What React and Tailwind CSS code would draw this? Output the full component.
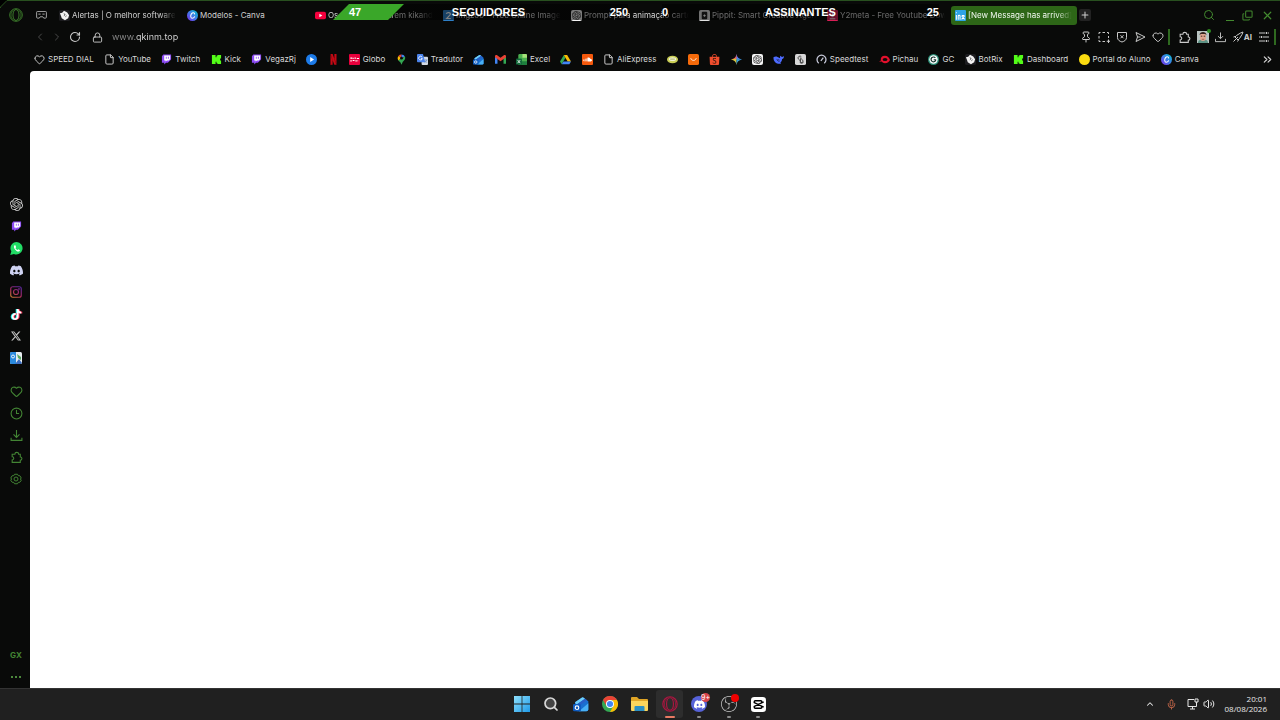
import React from 'react';
import {
  Heart, File, Search, X, Plus, Pin, ChevronLeft, ChevronRight, ChevronUp, ChevronsRight,
  RotateCw, Lock, Clock3, Mic, Volume2, Copy
} from 'lucide-react';
import {
  SiOpenai, SiDiscord, SiTiktok, SiX, SiNetflix,
  SiSoundcloud, SiShopee, SiObsstudio
} from 'react-icons/si';

const OperaLogo = ({ className }) => (
  <svg viewBox="0 0 24 24" fill="none" stroke="currentColor" strokeWidth="1.7" className={className}>
    <circle cx="12" cy="12" r="10.8" />
    <ellipse cx="12" cy="12" rx="5.2" ry="9.4" />
    <path d="M8 3.4c-6 3-6 14.200 0 17.200M16 3.400c6 3 6 14.200 0 17.200" strokeWidth="1.200" />
  </svg>
);

// Thin outline icons shared by the toolbar and the sidebar
const Line = ({ children, className = 'size-3' }) => (
  <svg viewBox="0 0 24 24" fill="none" stroke="currentColor" strokeWidth="2" className={className}>
    {children}
  </svg>
);

const PuzzleIcon = () => (
  <Line className="size-[13px]"><path d="M4 6h5a3.500 3.500 0 0 1 7 0h3v5a3 3 0 0 1 0 6v4H4v-4.500c4 0 4-6 0-6z" /></Line>
);
const DownloadIcon = () => (
  <Line className="size-[13px]"><path d="M12 2v13M6.500 10l5.500 5.500 5.500-5.500M2 16v5h20v-5" /></Line>
);
const SnapshotIcon = () => (
  <Line>
    <path d="M2 6V3h3M9 3h5M18 3h3v3M21 10v4M2 10v5M2 18v3h3M9 21h5M21 17v7M17.500 20.500h7" />
  </Line>
);
const BlockerIcon = () => (
  <Line><path d="M3 3h18v10c0 5-4 7.500-9 9-5-1.500-9-4-9-9zM9 8.500l6 6M15 8.500l-6 6" /></Line>
);
const SendIcon = () => (
  <Line><path d="M4 3l18 9-18 9 3-9zM7 12h6" /></Line>
);
const SlidersIcon = () => (
  <Line><path d="M2 4h13M19 4h3M2 12h3M9 12h13M2 20h13M19 20h3M17 2v4M7 10v4M17 18v4" /></Line>
);
const WandIcon = () => (
  <Line>
    <path d="M9 9l8-5 5-2-2 5-5 8-3 3-6-6zM12 12l-9 9M3 12l3-1M11 21l2-3" />
  </Line>
);

const KickIcon = () => (
  <svg viewBox="0 0 12 12" className="size-[11px]">
    <path fill="#53fc18" d="M1 1h4v2.500h1V2h1V1h4v4h-1v2h1v4H7V10H6V8.500H5V11H1z" />
  </svg>
);

const CanvaIcon = () => (
  <svg viewBox="0 0 12 12" className="size-[11px]">
    <defs>
      <linearGradient id="canva" x1="0" y1="1" x2="1" y2="0">
        <stop offset="0" stopColor="#7d2ae8" />
        <stop offset="0.5" stopColor="#3f7be8" />
        <stop offset="1" stopColor="#00c4cc" />
      </linearGradient>
    </defs>
    <circle cx="6" cy="6" r="6" fill="url(#canva)" />
    <path d="M8.300 4.300C8.300 2.600 6 2.500 4.800 4.200S3.800 9 5.700 9c1.200 0 2-.7 2.600-1.600" fill="none" stroke="#fff" strokeWidth="1.100" strokeLinecap="round" />
  </svg>
);

const BotRixIcon = () => (
  <svg viewBox="0 0 12 12" className="size-[11px]">
    <rect width="12" height="12" rx="2" fill="#1c1c1f" />
    <path d="M5.500 .8L9 2.800l2 3-1 3.200-3.500 2.200L3 9 2.200 6.500 1 3.500l2.500-.4z" fill="#f2f2f2" />
    <path d="M5.200 4l1.600 1-1.500 1.300M7 7.300l1.300-1" stroke="#222" strokeWidth="0.800" fill="none" />
  </svg>
);

const TwitchIcon = () => (
  <svg viewBox="0 0 12 12" className="size-[11px]">
    <path d="M2.500.5L1 2.500v7h2.500v2L5.500 9.500h2L11 6V.5z" fill="#8c4bf5" />
    <path d="M3.500 1.500H10v4L8.500 7h-2L5 8.300V7H3.500z" fill="#fff" />
    <path d="M5.800 3v2.200M8.100 3v2.200" stroke="#8c4bf5" strokeWidth="0.900" />
  </svg>
);

const YoutubeIcon = () => (
  <svg viewBox="0 0 12 12" className="size-[11px]">
    <rect y="1.800" width="12" height="8.400" rx="2" fill="#f5003d" />
    <path d="M4.800 4.200v3.600L8 6z" fill="#fff" />
  </svg>
);

const PlayIcon = () => (
  <svg viewBox="0 0 12 12" className="size-[11px]">
    <circle cx="6" cy="6" r="6" fill="#1d7be8" />
    <path d="M4.600 3.400v5.200L8.800 6z" fill="#fff" />
  </svg>
);

const GloboIcon = () => (
  <svg viewBox="0 0 12 12" className="size-[11px]">
    <rect width="12" height="12" rx="1" fill="#e8003c" />
    <path d="M1.500 4.500h2M4.500 4v1.500M6 4.500h1.500M8.500 5h2.500M1.500 7.500h1.500M4 7.200h2M7 7.500h1.500M9.500 7v1" stroke="#fff" strokeWidth="1.100" fill="none" />
  </svg>
);

const MapsIcon = () => (
  <svg viewBox="0 0 12 12" className="size-[11px]">
    <path d="M6 .5A4.300 4.300 0 0 0 2.600 2.100L6 5z" fill="#ea4335" />
    <path d="M6 .5a4.300 4.300 0 0 1 3.700 2.100L6 5z" fill="#4285f4" />
    <path d="M2.600 2.100A4.300 4.300 0 0 0 2.400 7L6 5z" fill="#fbbc04" />
    <path d="M9.700 2.600C11 5.500 8.500 7 7.300 8.800L6 11.700 4.700 9 2.400 7 6 5z" fill="#34a853" />
    <circle cx="6" cy="4.600" r="1.500" fill="#0a0a0a" />
  </svg>
);

const TranslateIcon = () => (
  <svg viewBox="0 0 12 12" className="size-[11px]">
    <rect x="5" y="3" width="7" height="9" rx="1" fill="#d3d9e2" />
    <path d="M0 1a1 1 0 0 1 1-1h5.500L9 9H1a1 1 0 0 1-1-1z" fill="#4b83ea" />
    <path d="M5.600 3.500A2 2 0 1 0 5.800 5H4.300" stroke="#fff" strokeWidth="0.900" fill="none" />
    <path d="M8.500 6.500h3M10.800 6.500L8.500 9.500M8.800 7.200l2 2.300" stroke="#5c7fb5" strokeWidth="0.700" fill="none" />
  </svg>
);

const OutlookIcon = ({ className = 'size-[11px]' }) => (
  <svg viewBox="0 0 24 24" className={className}>
    <path d="M3 9.500L13 2.500a2.500 2.500 0 0 1 3 0L23 8v12a3 3 0 0 1-3 3H6a3 3 0 0 1-3-3z" fill="#1a6fd0" />
    <path d="M3 9.500L13 2.500a2.500 2.500 0 0 1 3 0l2 1.500L5 13z" fill="#6fd0fa" />
    <path d="M5 13L18 4l3 2.500L9 15z" fill="#2a5fc8" />
    <path d="M9 23L23 11v9a3 3 0 0 1-3 3z" fill="#48b0f5" />
    <rect x="0" y="12" width="12" height="11" rx="2" fill="#0f5cc0" />
    <circle cx="6" cy="17.500" r="2.700" fill="none" stroke="#fff" strokeWidth="1.700" />
  </svg>
);

const GmailIcon = () => (
  <svg viewBox="0 0 12 12" className="size-[11px]">
    <path d="M0 3v7.500h2.700V5z" fill="#4285f4" />
    <path d="M12 3v7.500H9.300V5z" fill="#34a853" />
    <path d="M0 3.500V2.600C0 1 1.700.8 2.700 1.600L6 4.200l3.300-2.600c1-.8 2.700-.6 2.700 1v.9L6 8z" fill="#ea4335" />
  </svg>
);

const ExcelIcon = () => (
  <svg viewBox="0 0 12 12" className="size-[11px]">
    <rect x="2.500" width="9.500" height="12" rx="1.500" fill="#4bb04f" />
    <path d="M7 0h3.500A1.500 1.500 0 0 1 12 1.500V4H7z" fill="#a6e27a" />
    <path d="M2.500 8H12v2.500a1.500 1.500 0 0 1-1.500 1.500H4a1.500 1.500 0 0 1-1.500-1.500z" fill="#1e7f3e" />
    <rect y="5" width="6.500" height="6.500" rx="1" fill="#12693a" />
    <path d="M1.800 6.600l2.800 3.400M4.600 6.600L1.800 10" stroke="#fff" strokeWidth="0.900" />
  </svg>
);

const DriveIcon = () => (
  <svg viewBox="0 0 12 12" className="size-[11px]">
    <path d="M4.200 1.200L0 8.200l1.800 3L6 4.200z" fill="#34a853" />
    <path d="M4.200 1.200h3.600l4.200 7H8.300z" fill="#fbbc04" />
    <path d="M3.800 8.200H12l-1.800 3H1.800z" fill="#4285f4" />
  </svg>
);

const SoundcloudIcon = () => (
  <span className="flex size-[11px] items-center justify-center rounded-[1px] bg-[#f4580c] text-white">
    <SiSoundcloud size={9} />
  </span>
);

const LimeIcon = () => (
  <svg viewBox="0 0 12 12" className="size-[11px]">
    <ellipse cx="6" cy="6" rx="6" ry="4.200" fill="#c9ce55" />
    <ellipse cx="6" cy="5.600" rx="4" ry="2" fill="#f0f1d6" />
    <path d="M3.500 5.600h5" stroke="#8e9340" strokeWidth="0.800" />
  </svg>
);

const OrangeIcon = () => (
  <svg viewBox="0 0 12 12" className="size-[11px]">
    <rect width="12" height="12" rx="2" fill="#f56a0a" />
    <path d="M3 4.500c.5 3.300 5.500 3.300 6 0" stroke="#fff" strokeWidth="0.900" fill="none" />
  </svg>
);

const ShopeeIcon = () => <SiShopee size={11} color="#ee4d2d" />;

const GeminiIcon = () => (
  <svg viewBox="0 0 12 12" className="size-[11px]">
    <path d="M6 0c.6 3.600 2.400 5.400 6 6H5z" fill="#4f7df0" />
    <path d="M6 0C5.400 3.600 3.600 5.400 0 6h6z" fill="#ea5a5a" />
    <path d="M0 6c3.600.6 5.400 2.400 6 6V5z" fill="#d8c33a" />
    <path d="M12 6c-3.600.6-5.400 2.400-6 6V5.500z" fill="#35a2d8" />
  </svg>
);

const GptTile = () => (
  <span className="flex size-[11px] items-center justify-center rounded-[2px] bg-[#f4f4f4] text-[#222]">
    <SiOpenai size={9} />
  </span>
);

const DeepseekIcon = () => (
  <svg viewBox="0 0 12 12" className="size-[11px]">
    <path d="M.5 3.500C2.500 2 5 2.600 6.500 4.200 8 5 8 3 7.500 2c1.300.5 1.700 1.200 2.500 1.200.7-.1 1.300-.6 2-.7 0 1.800-.9 2.700-2 3-.2 2-1 3.200-2 4l.8.8C5.500 11.500.2 9.500.5 3.500z" fill="#4d6bfe" />
    <path d="M4 6c1.200.4 2 1.500 2.700 2.500M6 6l1 .7" stroke="#0a0a0a" strokeWidth="0.800" fill="none" />
  </svg>
);

const ClipTile = () => (
  <svg viewBox="0 0 12 12" className="size-[11px]">
    <rect width="12" height="12" rx="2" fill="#d8d8d8" />
    <path d="M7 3.200A2 2 0 1 0 4 5.800l2.500 2.400M5 8.800a2 2 0 1 0 3-2.600L5.200 3.700M6 5v3.500a1.500 1.500 0 0 0 3 0" stroke="#333" strokeWidth="0.900" fill="none" />
  </svg>
);

const SpeedtestIcon = () => (
  <svg viewBox="0 0 12 12" className="size-[11px]" fill="none">
    <path d="M3 10a4.900 4.900 0 1 1 6 0" stroke="#c9cbdc" strokeWidth="1.400" />
    <path d="M5.300 7.500L8 4" stroke="#c9cbdc" strokeWidth="1.400" />
  </svg>
);

const PichauIcon = () => (
  <svg viewBox="0 0 12 12" className="size-[11px]">
    <path d="M0 8.500L2 7C1.500 4 3 2 6.500 2 9.500 2 11 4 12 6.500 11 8.500 9.500 10 6.500 10 4.500 10 3.500 9 2.800 8.300z" fill="#e2102c" />
    <ellipse cx="6.600" cy="6" rx="2.600" ry="1.700" fill="#0a0a0a" />
  </svg>
);

const GcIcon = () => (
  <svg viewBox="0 0 12 12" className="size-[11px]">
    <circle cx="6" cy="6" r="6" fill="#2c8f78" />
    <circle cx="6" cy="6" r="4.600" fill="#fff" />
    <path d="M8 4.300A2.600 2.600 0 1 0 8.300 7V6.300H6.200" stroke="#17352f" strokeWidth="1.300" fill="none" />
  </svg>
);

const YellowDot = () => <span className="block size-[11px] rounded-full bg-[#fbdc10]" />;

const HeartIcon = () => <Heart size={11} strokeWidth={2} />;
const FileIcon = () => <File size={11} strokeWidth={2} />;

const ZIcon = () => (
  <svg viewBox="0 0 12 12" className="size-[11px]">
    <rect width="12" height="12" rx="1" fill="#2e80c8" />
    <path d="M3.500 4.200C4.500 2 8.500 2.500 8 5L4 9.300h4.500" stroke="#fff" strokeWidth="1.300" fill="none" />
  </svg>
);

const PippitIcon = () => (
  <svg viewBox="0 0 12 12" className="size-[11px]">
    <rect width="12" height="12" rx="2" fill="#e2e2e2" />
    <rect x="3" y="2" width="6" height="8" rx="1" fill="#222" />
    <path d="M6 4.500L7.500 6 6 7.500 4.500 6z" fill="#fff" />
  </svg>
);

const Y2Icon = () => (
  <svg viewBox="0 0 12 12" className="size-[11px]">
    <rect width="12" height="12" rx="1" fill="#d81f56" />
    <path d="M6 2.500v5M3.800 5.500L6 7.800l2.200-2.300M3 9.600h6" stroke="#fff" strokeWidth="1" fill="none" />
  </svg>
);

const InboxIcon = () => (
  <svg viewBox="0 0 12 12" className="size-[11px]">
    <rect width="12" height="12" rx="1" fill="#2ea3e6" />
    <path d="M1.500 5.500v5M3.500 10.500V6.500c0-1.200 2-1.200 2 0v4M7.500 6h2.800M7.200 10.300l3.300-4M7.200 6.300l3.300 4M1 3h1" stroke="#fff" strokeWidth="1.100" fill="none" />
  </svg>
);

const TABS = [
  { title: 'Alertas | O melhor software', icon: BotRixIcon },
  { title: 'Modelos - Canva', icon: CanvaIcon, full: true },
  { title: 'Os que mais querem kikando', icon: YoutubeIcon },
  { title: 'Imgzoo - Free Online Image', icon: ZIcon },
  { title: 'Prompt para animação cartoon', icon: GptTile },
  { title: 'Pippit: Smart Creative Agent', icon: PippitIcon },
  { title: 'Y2meta - Free Youtube Down', icon: Y2Icon },
  { title: '[New Message has arrived]', icon: InboxIcon, active: true },
];

const BOOKMARKS = [
  { label: 'SPEED DIAL', icon: HeartIcon },
  { label: 'YouTube', icon: FileIcon },
  { label: 'Twitch', icon: TwitchIcon },
  { label: 'Kick', icon: KickIcon },
  { label: 'VegazRj', icon: TwitchIcon },
  { name: 'Player', icon: PlayIcon },
  { name: 'Netflix', icon: () => <SiNetflix size={11} color="#c50914" /> },
  { label: 'Globo', icon: GloboIcon },
  { name: 'Maps', icon: MapsIcon },
  { label: 'Tradutor', icon: TranslateIcon },
  { name: 'Outlook', icon: OutlookIcon },
  { name: 'Gmail', icon: GmailIcon },
  { label: 'Excel', icon: ExcelIcon },
  { name: 'Drive', icon: DriveIcon },
  { name: 'SoundCloud', icon: SoundcloudIcon },
  { label: 'AliExpress', icon: FileIcon },
  { name: 'Lime', icon: LimeIcon },
  { name: 'Store', icon: OrangeIcon },
  { name: 'Shopee', icon: ShopeeIcon },
  { name: 'Gemini', icon: GeminiIcon },
  { name: 'ChatGPT', icon: GptTile },
  { name: 'DeepSeek', icon: DeepseekIcon },
  { name: 'Clips', icon: ClipTile },
  { label: 'Speedtest', icon: SpeedtestIcon },
  { label: 'Pichau', icon: PichauIcon },
  { label: 'GC', icon: GcIcon },
  { label: 'BotRix', icon: BotRixIcon },
  { label: 'Dashboard', icon: KickIcon },
  { label: 'Portal do Aluno', icon: YellowDot },
  { label: 'Canva', icon: CanvaIcon },
];

const InstagramIcon = () => (
  <svg viewBox="0 0 24 24" className="size-3" fill="none" stroke="url(#insta)" strokeWidth="2.400">
    <defs>
      <linearGradient id="insta" gradientUnits="userSpaceOnUse" x1="2" y1="24" x2="18" y2="0">
        <stop offset="0" stopColor="#c98a2c" />
        <stop offset="0.5" stopColor="#a3265f" />
        <stop offset="1" stopColor="#5a28a0" />
      </linearGradient>
    </defs>
    <rect x="1.500" y="1.500" width="21" height="21" rx="4" />
    <circle cx="12" cy="12" r="5" />
    <circle cx="18" cy="6" r="0.600" />
  </svg>
);

const WhatsappIcon = () => (
  <svg viewBox="0 0 24 24" className="size-[13px]">
    <path d="M12.500 0A11.500 11.500 0 0 0 2.500 17.300L.5 24l6.800-1.900A11.500 11.500 0 1 0 12.500 0z" fill="#22dc66" />
    <path d="M8.500 6C5.500 8.500 8.500 13.500 11.500 16c3 2.200 6 2.200 7-.8l-3-1.800-1.500 1.500c-1.600-.6-3.200-2.200-4-4L11.300 9.500 10 6z" fill="#fff" />
  </svg>
);

const MailSideIcon = () => (
  <svg viewBox="0 0 12 12" className="size-3">
    <rect width="12" height="12" rx="1.500" fill="#e8eef2" />
    <path d="M0 1.500A1.500 1.500 0 0 1 1.500 0H6v12H1.500A1.500 1.500 0 0 1 0 10.500z" fill="#2a8ade" />
    <circle cx="3" cy="4.500" r="1.500" fill="none" stroke="#fff" strokeWidth="0.900" />
    <path d="M7 2l4 3v3L8 6z" fill="#57a860" />
    <path d="M5 12l4-5 3 4-1 1z" fill="#3c6ec0" />
  </svg>
);

const TiktokIcon = () => (
  <span className="relative block size-[11px]">
    <SiTiktok size={11} color="#25f4ee" className="absolute -left-px top-0" />
    <SiTiktok size={11} color="#fe2c55" className="absolute left-px top-0" />
    <SiTiktok size={11} color="#fff" className="absolute left-0 top-0" />
  </span>
);

const GearIcon = () => (
  <svg viewBox="0 0 24 24" className="size-3" fill="none" stroke="currentColor" strokeWidth="2">
    <path d="M9 2.500h6l1.500 2.800 3.200.2L22.500 10l-1.700 2 1.700 2.500-2.800 4-3.200.2-1.500 2.800H9l-1.500-2.800-3.200-.2-2.800-4L3.200 12l-1.700-2 2.800-4.500 3.200-.2z" />
    <circle cx="12" cy="12" r="4" />
  </svg>
);

const APPS = [
  { name: 'ChatGPT', icon: () => <SiOpenai size={13} color="#d0d0d0" /> },
  { name: 'Twitch', icon: TwitchIcon },
  { name: 'WhatsApp', icon: WhatsappIcon },
  { name: 'Discord', icon: () => <SiDiscord size={13} color="#cfd3f2" /> },
  { name: 'Instagram', icon: InstagramIcon },
  { name: 'TikTok', icon: TiktokIcon },
  { name: 'X', icon: () => <SiX size={10} color="#c8c8c8" /> },
  { name: 'Mail', icon: MailSideIcon },
];

const TOOLS = [
  { name: 'Favorites', icon: () => <Heart size={13} strokeWidth={2} /> },
  { name: 'History', icon: () => <Clock3 size={13} strokeWidth={2} /> },
  { name: 'Downloads', icon: DownloadIcon },
  { name: 'Extensions', icon: PuzzleIcon },
  { name: 'Settings', icon: GearIcon },
];

const COUNTERS = [
  { value: '47', label: 'SEGUIDORES', goal: '250' },
  { value: '0', label: 'ASSINANTES', goal: '25' },
];

function TabBar() {
  return (
    <div className="flex h-[26px] items-center pt-1">
      <button aria-label="Menu" className="flex w-8 shrink-0 justify-center text-[#3c7a2b]">
        <OperaLogo className="size-[14px]" />
      </button>
      <button aria-label="GX Corner" className="flex w-[23px] shrink-0 items-center pl-1 text-[#b5b5b5]">
        <svg viewBox="0 0 24 18" className="h-2 w-[11px]" fill="none" stroke="currentColor" strokeWidth="2">
          <path d="M3 1h18a2 2 0 0 1 2 2v11a2 2 0 0 1-2 2h-4l-2-3H9l-2 3H3a2 2 0 0 1-2-2V3a2 2 0 0 1 2-2zM5 7h5M14 7h5" />
        </svg>
      </button>
      <nav className="flex min-w-0 flex-[0_1_1024px]">
        {TABS.map(({ title, icon: Icon, active, full }) => (
          <button
            key={title}
            className={`mr-0.5 flex h-[19px] min-w-0 flex-1 items-center gap-0.5 rounded-[3px] pl-1 pr-1 text-[8px] ${active ? 'bg-[#2d6617] text-[#f0f7ee]' : 'text-[#d0d0d0]'}`}
          >
            <span className="shrink-0"><Icon /></span>
            <span className={`overflow-hidden whitespace-nowrap text-left ${full ? '' : '[mask-image:linear-gradient(90deg,#000_85%,transparent)]'}`}>{title}</span>
          </button>
        ))}
      </nav>
      <button aria-label="New tab" className="flex size-3 shrink-0 items-center justify-center rounded-[2px] bg-[#222] text-[#ccc]">
        <Plus size={10} strokeWidth={2.500} />
      </button>
      <div className="ml-auto flex items-center gap-2 pr-[6px] text-[#438a2f]">
        <button aria-label="Search tabs"><Search size={12} strokeWidth={2} /></button>
        <button aria-label="Minimize" className="flex h-3 w-[11px] items-end justify-end"><span className="h-px w-2 bg-[#438a2f]" /></button>
        <button aria-label="Restore"><Copy size={11} strokeWidth={2.200} className="-scale-y-100" /></button>
        <button aria-label="Close"><X size={13} strokeWidth={2.200} /></button>
      </div>
    </div>
  );
}

function AddressBar() {
  return (
    <div className="flex h-[22px] items-center pl-[34px] pr-1 text-[#cacaca]">
      <button aria-label="Back" className="mr-[5px] text-[#4a4a4a]"><ChevronLeft size={12} /></button>
      <button aria-label="Forward" className="mr-[6px] text-[#4a4a4a]"><ChevronRight size={12} /></button>
      <button aria-label="Reload" className="mr-[11px]"><RotateCw size={12} strokeWidth={2.200} /></button>
      <Lock size={11} className="mr-[9px] shrink-0" />
      <input
        aria-label="Address"
        defaultValue="www.qkinm.top"
        className="min-w-0 flex-1 bg-[linear-gradient(90deg,#8c8c8c_24px,#dcdcdc_24px)] bg-clip-text text-[9px] text-transparent outline-none"
      />
      <div className="flex items-center gap-[6px]">
        <button aria-label="Pin"><Pin size={12} /></button>
        <button aria-label="Snapshot"><SnapshotIcon /></button>
        <button aria-label="Blocker"><BlockerIcon /></button>
        <button aria-label="Send"><SendIcon /></button>
        <button aria-label="Favorite"><Heart size={12} /></button>
      </div>
      <span className="ml-1 mr-2 h-4 w-0.5 bg-[#2f6a20]" />
      <div className="flex items-center gap-[6px]">
        <button aria-label="Extensions"><PuzzleIcon /></button>
        <button aria-label="Profile" className="relative">
          <svg viewBox="0 0 12 12" className="size-3">
            <rect width="12" height="12" fill="#b9c4c2" />
            <path d="M1 12c0-3 2-3.500 5-3.500s5 .5 5 3.500z" fill="#5d9183" />
            <rect x="3" y="2" width="6" height="8" rx="3" fill="#e0a690" />
            <path d="M2.500 4C2.500 0 9.500 0 9.500 4L8 3H4z" fill="#37231d" />
            <path d="M3.800 5.200h1.500M6.700 5.200h1.500" stroke="#37231d" strokeWidth="0.900" />
            <path d="M4.800 8.300h2.400" stroke="#8a4a3c" strokeWidth="0.700" />
          </svg>
          <span className="absolute -right-0.5 -top-0.5 size-1 rounded-full bg-[#2f8a20]" />
        </button>
        <button aria-label="Downloads">
          <Line className="size-[11px]"><path d="M12 1v13M6.500 9l5.500 5.500L17.500 9M1 15v6h22v-6" /></Line>
        </button>
        <button className="flex items-center text-[8px] font-bold"><WandIcon />AI</button>
        <button aria-label="Easy setup"><SlidersIcon /></button>
      </div>
      <span className="ml-1 h-4 w-0.5 bg-[#2f6a20]" />
    </div>
  );
}

function BookmarksBar() {
  return (
    <div className="flex h-[22px] items-center pl-[34px] pr-[6px] text-[#d8d8d8]">
      <nav className="flex min-w-0 flex-[0_1_1165px] items-center justify-between overflow-hidden">
        {BOOKMARKS.map(({ label, name, icon: Icon }, i) => (
          <a key={i} href="#" aria-label={label || name} className="flex shrink-0 items-center gap-[3px] whitespace-nowrap text-[8px]">
            <Icon />
            {label}
          </a>
        ))}
      </nav>
      <button aria-label="More bookmarks" className="ml-auto"><ChevronsRight size={13} strokeWidth={2} /></button>
    </div>
  );
}

// Stream goal bars that float over the tab strip
function GoalOverlay() {
  return (
    <div className="pointer-events-none absolute left-[333px] top-1 flex h-4 gap-[34px] font-['Liberation_Sans',sans-serif] text-[11px] font-bold leading-4 text-white">
      <div className="absolute left-0 top-0 h-4 w-[71px] bg-[#3aa729] [clip-path:polygon(16px_0,100%_0,55px_100%,0_100%)]" />
      {COUNTERS.map((c, i) => (
        <div
          key={c.label}
          className={`grid grid-cols-[1fr_auto_1fr] ${i === 0 ? 'w-[295px] bg-[linear-gradient(90deg,transparent_60px,#00000080_60px)] pl-4' : 'w-[277px] bg-[#00000080]'}`}
        >
          <span className="relative">{c.value}</span>
          <span className="relative">{c.label}</span>
          <span className="relative text-right">{c.goal}</span>
        </div>
      ))}
    </div>
  );
}

function Sidebar() {
  return (
    <aside className="flex w-[30px] shrink-0 flex-col pl-[2px] pt-[122px] text-[#438534]">
      {APPS.map(({ name, icon: Icon }) => (
        <button key={name} aria-label={name} className="flex h-[22px] items-center justify-center"><Icon /></button>
      ))}
      <div className="mt-[11px] flex flex-col">
        {TOOLS.map(({ name, icon: Icon }) => (
          <button key={name} aria-label={name} className="flex h-[22px] items-center justify-center"><Icon /></button>
        ))}
      </div>
      <div className="mt-auto flex flex-col">
        <button className="h-[22px] text-[8px] font-bold">GX</button>
        <button aria-label="More" className="flex h-[22px] items-center justify-center gap-0.5">
          <span className="size-0.5 bg-[#4c8a3c]" />
          <span className="size-0.5 bg-[#4c8a3c]" />
          <span className="size-0.5 bg-[#4c8a3c]" />
        </button>
      </div>
    </aside>
  );
}

const WindowsIcon = () => (
  <svg viewBox="0 0 16 16" className="size-4">
    <defs>
      <linearGradient id="win" gradientUnits="userSpaceOnUse" x1="0" y1="0" x2="16" y2="16">
        <stop offset="0" stopColor="#8fe0fb" />
        <stop offset="1" stopColor="#1f9ae8" />
      </linearGradient>
    </defs>
    <path d="M0 0h7.600v7.600H0zM8.400 0H16v7.600H8.400zM0 8.400h7.600V16H0zM8.400 8.400H16V16H8.400z" fill="url(#win)" />
  </svg>
);

const ChromeIcon = () => (
  <svg viewBox="0 0 24 24" className="size-4">
    <circle cx="12" cy="12" r="12" fill="#34a853" />
    <path d="M1.600 6A12 12 0 0 1 22.400 6H12a6 6 0 0 0-5.200 9z" fill="#ea4335" />
    <path d="M22.400 6A12 12 0 0 1 12 24l5.200-9A6 6 0 0 0 17 8.500L15 6z" fill="#fbbc04" />
    <circle cx="12" cy="12" r="6" fill="#fff" />
    <circle cx="12" cy="12" r="4.600" fill="#4285f4" />
  </svg>
);

const FolderIcon = () => (
  <svg viewBox="0 0 17 16" className="h-4 w-[17px]">
    <path d="M0 2a1 1 0 0 1 1-1h5l2 2h8a1 1 0 0 1 1 1v4H0z" fill="#e0a526" />
    <path d="M0 5h17v9a1 1 0 0 1-1 1H1a1 1 0 0 1-1-1z" fill="#fbd55c" />
    <path d="M3.500 15v-4a1 1 0 0 1 1-1h8a1 1 0 0 1 1 1v4z" fill="#2a8fc4" />
  </svg>
);

const DiscordTask = () => (
  <span className="relative flex size-4 items-center justify-center rounded-full bg-[#5662d8]">
    <SiDiscord size={11} color="#fff" />
    <span className="absolute -right-[3px] -top-[3px] flex size-[9px] items-center justify-center rounded-full bg-[#d8434a] text-[7px] leading-none text-white">9+</span>
  </span>
);

const ObsTask = () => (
  <span className="relative flex size-4">
    <SiObsstudio size={16} color="#c8c8c8" />
    <span className="absolute -right-0.5 -top-[2px] size-2 rounded-full bg-[#f00000]" />
  </span>
);

const CapcutIcon = () => (
  <svg viewBox="0 0 16 16" className="size-[15px]">
    <rect width="16" height="16" rx="3.500" fill="#fff" />
    <path d="M13.500 5.200L3.500 10v1a1 1 0 0 0 1 1h6a1 1 0 0 0 1-1v-.8M13.500 10.800L3.500 6V5a1 1 0 0 1 1-1h6a1 1 0 0 1 1 1v.8" stroke="#000" strokeWidth="1.600" fill="none" />
  </svg>
);

const TASKS = [
  { name: 'Start', icon: WindowsIcon },
  { name: 'Search', icon: () => <Search size={16} strokeWidth={2.600} color="#d8d8d8" fill="#444" /> },
  { name: 'Outlook', icon: () => <OutlookIcon className="size-4" /> },
  { name: 'Chrome', icon: ChromeIcon },
  { name: 'Explorer', icon: FolderIcon },
  { name: 'Opera GX', icon: () => <OperaLogo className="size-4 text-[#b01541]" />, active: true },
  { name: 'Discord', icon: DiscordTask, running: true },
  { name: 'OBS', icon: ObsTask, running: true },
  { name: 'CapCut', icon: CapcutIcon, running: true },
];

function Taskbar() {
  return (
    <footer className="grid h-8 grid-cols-[1fr_auto_1fr] items-center bg-[#202020] shadow-[inset_0_1px_#333]">
      <div />
      <div className="grid w-[266px] grid-cols-9">
        {TASKS.map(({ name, icon: Icon, active, running }) => (
          <button
            key={name}
            aria-label={name}
            className={`relative mx-px flex h-7 items-center justify-center rounded-[3px] ${active ? 'bg-[#2d2d2d]' : ''}`}
          >
            <Icon />
            {active && <span className="absolute bottom-0 h-0.5 w-[10px] rounded-full bg-[#e87a63]" />}
            {running && <span className="absolute bottom-0 h-0.5 w-1 rounded-full bg-[#8c8c8c]" />}
          </button>
        ))}
      </div>
      <div className="flex items-center justify-end pr-[13px] text-[#e8e8e8]">
        <button aria-label="Hidden icons" className="mr-[11px]"><ChevronUp size={10} strokeWidth={2.500} /></button>
        <button aria-label="Microphone" className="mr-[10px] text-[#c9694a]"><Mic size={11} /></button>
        <button aria-label="Network" className="mr-1">
          <svg viewBox="0 0 12 12" className="size-3" fill="none" stroke="currentColor">
            <path d="M7 1.500H1v7h8.500V6M3 11h5M5.500 8.500V11M8 1h3v3H8zM9.500 4v2" />
          </svg>
        </button>
        <button aria-label="Volume" className="mr-[10px]"><Volume2 size={12} /></button>
        <div className="text-right font-['Open_Sans',sans-serif] text-[8px] leading-[10px]">
          <div>20:01</div>
          <div>08/08/2026</div>
        </div>
      </div>
    </footer>
  );
}

export default function App() {
  return (
    <div className="flex min-h-screen flex-col bg-[#090a09] font-[Inter,sans-serif]">
      <div className="relative flex flex-1 flex-col">
        <svg viewBox="0 0 8 8" className="absolute left-0 top-0 size-2">
          <path d="M0 0h8L0 8z" fill="#000" />
          <path d="M.5 8V7L7 .5h1" fill="none" stroke="#28501f" />
        </svg>
        <header className="border-t border-[#28501f]">
          <div className="-mt-px">
            <TabBar />
            <AddressBar />
            <BookmarksBar />
          </div>
        </header>
        <GoalOverlay />
        <div className="mt-px flex flex-1">
          <Sidebar />
          <main className="flex-1 rounded-tl bg-white" />
        </div>
      </div>
      <Taskbar />
    </div>
  );
}
